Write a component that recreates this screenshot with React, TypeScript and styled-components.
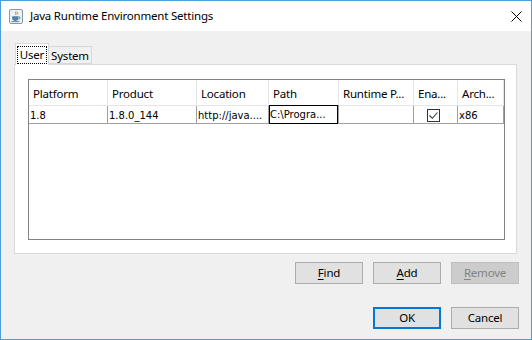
import React from "react";
import styled, { createGlobalStyle, css } from "styled-components";

const GlobalStyle = createGlobalStyle`
  html, body { margin: 0; padding: 0; background: #ffffff; }
  * { box-sizing: border-box; }
`;

const UI_FONT = `"Noto Sans", "Open Sans", sans-serif`;
const DATA_FONT = `"DejaVu Sans", Verdana, sans-serif`;

const Window = styled.div`
  width: 532px;
  height: 340px;
  border: 1px solid #4a9fdc;
  background: #f0f0f0;
  display: flex;
  flex-direction: column;
  font-family: ${UI_FONT};
  font-size: 11.5px;
  letter-spacing: -0.2px;
  color: #000;
`;

const TitleBar = styled.div`
  height: 30px;
  background: #ffffff;
  display: flex;
  align-items: center;
  padding-left: 8px;
  padding-right: 9px;
`;

const Title = styled.div`
  margin-left: 7px;
  flex: 1;
  line-height: 16px;
  margin-top: -1px;
`;

const CloseButton = styled.div`
  width: 12px;
  height: 12px;
  display: flex;
  align-items: center;
  justify-content: center;
`;

const Body = styled.div`
  flex: 1;
  padding: 12px 12px 0 12px;
  display: flex;
  flex-direction: column;
`;

const Tabs = styled.div`
  margin-left: 1px;
  width: 503px;
  display: flex;
  flex-direction: column;
`;

const TabStrip = styled.div`
  display: flex;
  align-items: flex-end;
  height: 21px;
  padding-left: 1px;
  position: relative;
  z-index: 1;
`;

const Tab = styled.div<{ $selected?: boolean }>`
  line-height: 16px;
  border: 1px solid #d9d9d9;
  display: flex;
  align-items: center;
  justify-content: center;
  ${(p) =>
    p.$selected
      ? css`
          background: #ffffff;
          height: 22px;
          width: 34px;
          border-bottom: none;
          margin-bottom: -1px;
        `
      : css`
          background: #f0f0f0;
          height: 18px;
          width: 43px;
          border-left: none;
          padding-top: 1px;
        `}
`;

const FocusRing = styled.span`
  border: 1px dotted #000;
  padding: 0 2px;
  height: 18px;
  line-height: 16px;
  margin-top: 1px;
  display: flex;
  align-items: center;
`;

const Panel = styled.div`
  height: 190px;
  background: #ffffff;
  border: 1px solid #d9d9d9;
  padding: 14px 12px 13px 13px;
  display: flex;
`;

const Table = styled.div`
  flex: 1;
  border: 1px solid #828282;
  background: #ffffff;
  display: flex;
  flex-direction: column;
`;

const COLS = "79px 89px 72px 70px 75px 44px 46px";

const HeaderRow = styled.div`
  display: grid;
  grid-template-columns: ${COLS};
  height: 26px;
  border-bottom: 1px solid #e5e5e5;
`;

const HeaderCell = styled.div`
  line-height: 16px;
  padding-left: 4px;
  padding-top: 2px;
  border-right: 1px solid #e5e5e5;
  display: flex;
  align-items: center;
  white-space: nowrap;
  overflow: hidden;
`;

const DataRow = styled.div`
  display: grid;
  grid-template-columns: ${COLS};
  height: 18px;
  border-bottom: 1px solid #a0a0a0;
`;

const DataCell = styled.div<{ $focused?: boolean; $center?: boolean }>`
  font-family: ${DATA_FONT};
  font-size: 10px;
  letter-spacing: 0;
  padding-left: 1px;
  border-right: 1px solid #a0a0a0;
  display: flex;
  align-items: center;
  justify-content: ${(p) => (p.$center ? "center" : "flex-start")};
  white-space: nowrap;
  overflow: hidden;
  ${(p) =>
    p.$focused &&
    css`
      box-shadow: inset 0 0 0 1px #000;
      margin-top: -1px;
      height: 19px;
    `}
`;

const CheckBox = styled.div`
  width: 13px;
  height: 13px;
  border: 1px solid #333333;
  background: #fff;
  display: flex;
  align-items: center;
  justify-content: center;
  margin-left: -5px;
`;

const ButtonRow = styled.div<{ $top: number }>`
  display: flex;
  justify-content: flex-end;
  gap: 10px;
  margin-top: ${(p) => p.$top}px;
`;

const Button = styled.div<{ $variant?: "default" | "disabled" }>`
  width: 68px;
  height: 22px;
  border: 1px solid #adadad;
  background: #e1e1e1;
  display: flex;
  align-items: center;
  justify-content: center;
  line-height: 16px;
  ${(p) =>
    p.$variant === "default" &&
    css`
      border-color: #0078d7;
      box-shadow: inset 0 0 0 1px #0078d7;
    `}
  ${(p) =>
    p.$variant === "disabled" &&
    css`
      background: #cccccc;
      border-color: #bfbfbf;
      color: #838383;
    `}
`;

const Mnemonic = styled.span`
  text-decoration: underline;
  text-underline-offset: 2px;
`;

const JavaIcon = () => (
  <svg width="14" height="15" viewBox="0 0 14 15">
    <rect x="0.5" y="0.5" width="13" height="14" rx="1.5" fill="#eef2f7" stroke="#8796a8" />
    <path d="M7 2.5c-1.5 1 1 2-0.5 3.2M8.6 3c-1 0.8 0.8 1.4-0.3 2.4" stroke="#e76f00" strokeWidth="1" fill="none" />
    <path d="M3.2 7.2h6.2v2.4c0 1.6-1.3 2.4-3.1 2.4s-3.1-0.8-3.1-2.4z" fill="#5382a1" />
    <path d="M9.4 7.8h0.8a1 1 0 0 1 0 2h-0.9" stroke="#5382a1" strokeWidth="0.9" fill="none" />
    <path d="M2.4 12.6h8" stroke="#5382a1" strokeWidth="0.9" />
  </svg>
);

const CloseIcon = () => (
  <svg width="11" height="11" viewBox="0 0 11 11">
    <path d="M0.5 0.5L10.5 10.5M10.5 0.5L0.5 10.5" stroke="#000" strokeWidth="1" />
  </svg>
);

const CheckMark = () => (
  <svg width="11" height="11" viewBox="0 0 11 11">
    <path d="M1.5 5.5L4.3 8.3L9.5 2.5" stroke="#333" strokeWidth="1.1" fill="none" />
  </svg>
);

const headers = ["Platform", "Product", "Location", "Path", "Runtime P...", "Ena...", "Arch..."];

export default function App() {
  return (
    <>
      <GlobalStyle />
      <Window>
        <TitleBar>
          <JavaIcon />
          <Title>Java Runtime Environment Settings</Title>
          <CloseButton>
            <CloseIcon />
          </CloseButton>
        </TitleBar>
        <Body>
          <Tabs>
            <TabStrip>
              <Tab $selected>
                <FocusRing>User</FocusRing>
              </Tab>
              <Tab>System</Tab>
            </TabStrip>
            <Panel>
              <Table>
                <HeaderRow>
                  {headers.map((h) => (
                    <HeaderCell key={h}>{h}</HeaderCell>
                  ))}
                </HeaderRow>
                <DataRow>
                  <DataCell>1.8</DataCell>
                  <DataCell>1.8.0_144</DataCell>
                  <DataCell>http://java....</DataCell>
                  <DataCell $focused>C:\Progra...</DataCell>
                  <DataCell></DataCell>
                  <DataCell $center>
                    <CheckBox>
                      <CheckMark />
                    </CheckBox>
                  </DataCell>
                  <DataCell>x86</DataCell>
                </DataRow>
              </Table>
            </Panel>
          </Tabs>
          <ButtonRow $top={8}>
            <Button>
              <span><Mnemonic>F</Mnemonic>ind</span>
            </Button>
            <Button>
              <span><Mnemonic>A</Mnemonic>dd</span>
            </Button>
            <Button $variant="disabled">
              <span><Mnemonic>R</Mnemonic>emove</span>
            </Button>
          </ButtonRow>
          <ButtonRow $top={23}>
            <Button $variant="default">OK</Button>
            <Button>Cancel</Button>
          </ButtonRow>
        </Body>
      </Window>
    </>
  );
}
